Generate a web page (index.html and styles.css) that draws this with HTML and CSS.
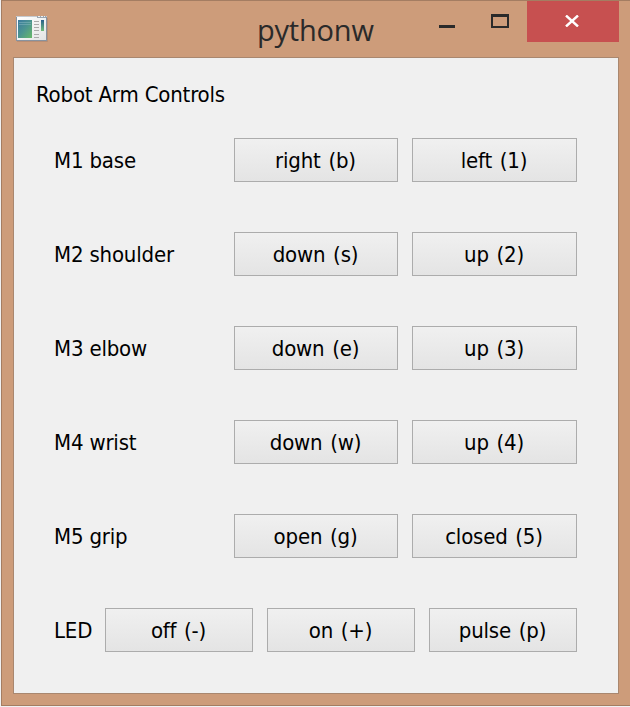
FILE: index.html
```html
<!DOCTYPE html>
<html lang="en">
<head>
<meta charset="utf-8">
<title>pythonw</title>
<link rel="stylesheet" href="styles.css">
</head>
<body>
<div class="window">
  <header class="titlebar">
    <svg class="app-icon" width="33" height="27" viewBox="0 0 33 27">
      <defs>
        <linearGradient id="pane" x1="0" y1="0" x2="1" y2="1"><stop offset="0" stop-color="#3b79a0"/><stop offset=".5" stop-color="#4c9590"/><stop offset="1" stop-color="#68b868"/></linearGradient>
        <linearGradient id="bar" x1="0" y1="0" x2="0" y2="1"><stop offset="0" stop-color="#285f8c"/><stop offset="1" stop-color="#70bd78"/></linearGradient>
        <linearGradient id="paper" x1="0" y1="0" x2="1" y2="1"><stop offset="0" stop-color="#fff"/><stop offset="1" stop-color="#e3e4e5"/></linearGradient>
      </defs>
      <path d="M1 25.500H31.500V2" fill="none" stroke="#a98672" opacity=".6"/>
      <path d="M0 0H31V25H0Z" fill="#8893a0"/>
      <path d="M1 1H30V24H1Z" fill="url(#paper)"/>
      <path d="M0 0H31V1H0Z" fill="#c5c9ce"/>
      <path d="M21 0H30V2H21Z" fill="#9ba5b0"/>
      <path d="M22 0H24V1H22ZM25 0H27V1H25ZM28 0H29V1H28Z" fill="#edf0f2"/>
      <path d="M2 4H16V22H2Z" fill="url(#pane)"/>
      <path d="M3 6.500H15M3 8.500H15" stroke="#8abac2" opacity=".5"/>
      <path d="M18 5.500H23M18 8.500H23M18 11.500H23M18 14.500H23M18 18.500H23M18 21.500H23" stroke="#aaa"/>
      <path d="M25 4H28V15H25Z" fill="url(#bar)"/>
    </svg>
    <h1 class="title">pythonw</h1>
    <div class="caption-buttons">
      <button class="caption" aria-label="Minimize"><svg width="16" height="14" viewBox="0 0 16 14"><path d="M0 11H16V14H0Z" fill="#2a2a2a"/></svg></button>
      <button class="caption maximize" aria-label="Maximize"><svg width="18" height="14" viewBox="0 0 18 14"><path d="M0 0H18V14H0ZM2 3V12H16V3Z" fill="#2a2a2a" fill-rule="evenodd"/></svg></button>
      <button class="caption close" aria-label="Close"><svg width="14" height="12" viewBox="0 0 14 12"><path d="M1 .5L13 11.500M13 .5L1 11.500" stroke="#fff" stroke-width="2.400"/></svg></button>
    </div>
  </header>
  <main class="client">
    <h2 class="heading">Robot Arm Controls</h2>
    <div class="controls">
      <div class="row"><span class="label">M1 base</span><button class="push">right (b)</button><button class="push">left (1)</button></div>
      <div class="row"><span class="label">M2 shoulder</span><button class="push">down (s)</button><button class="push">up (2)</button></div>
      <div class="row"><span class="label">M3 elbow</span><button class="push">down (e)</button><button class="push">up (3)</button></div>
      <div class="row"><span class="label">M4 wrist</span><button class="push">down (w)</button><button class="push">up (4)</button></div>
      <div class="row"><span class="label">M5 grip</span><button class="push">open (g)</button><button class="push">closed (5)</button></div>
      <div class="row led"><span class="label">LED</span><button class="push">off (-)</button><button class="push">on (+)</button><button class="push">pulse (p)</button></div>
    </div>
  </main>
</div>
</body>
</html>
```
FILE: styles.css
```css
* { box-sizing: border-box; }
body {
  margin: 0;
  background: #f0f0f2;
  overflow: hidden;
}
button {
  margin: 0;
  padding: 0;
  border: 0;
  border-radius: 0;
}
.window {
  margin-left: 1px;
  width: 629px;
  height: 706px;
  padding: 0 11px;
  background: #cd9c7a;
  border: 1px solid #a47d62;
  border-right: 0;
}
.titlebar {
  display: grid;
  grid-template-columns: 33px 1fr 192px;
  height: 56px;
  padding-left: 3px;
}
.app-icon { margin-top: 15px; }
.title {
  margin: 0;
  padding-left: 208px;
  font: 400 29px/58px "Open Sans", sans-serif;
  letter-spacing: -0.2px;
  color: #2a2a2a;
  white-space: nowrap;
}
.caption-buttons {
  display: grid;
  grid-template-columns: 40px 60px 92px;
  height: 41px;
}
.caption {
  display: flex;
  align-items: flex-start;
  justify-content: center;
  padding-top: 13px;
  background: transparent;
}
.caption svg { flex: none; }
.maximize { padding-left: 6px; }
.close {
  padding: 14px 2px 0 0;
  background: #c75050;
}
.client {
  width: 606px;
  height: 637px;
  padding: 21px 40px 0;
  background: #f0f0f0;
  border: 1px solid #a9876f;
}
.heading, .label, .push {
  font: 400 22px/30px "DejaVu Sans Condensed", "DejaVu Sans", sans-serif;
  letter-spacing: -0.18px;
  color: #000;
  white-space: nowrap;
}
.heading {
  margin: 0 0 28px -18px;
  padding-top: 1px;
}
.controls {
  display: flex;
  flex-direction: column;
  gap: 50px;
}
.row {
  display: grid;
  grid-template-columns: 166px 164px 165px;
  column-gap: 14px;
  height: 44px;
  align-items: center;
  width: 523px;
}
.led {
  grid-template-columns: 37px 148px 148px 148px;
}
.label { padding-top: 2px; }
.push {
  height: 44px;
  padding: 2px 1px 0 0;
  border: 1px solid #acacac;
  background: linear-gradient(#f0f0f0, #e4e4e4);
  word-spacing: 1.6px;
}
```
